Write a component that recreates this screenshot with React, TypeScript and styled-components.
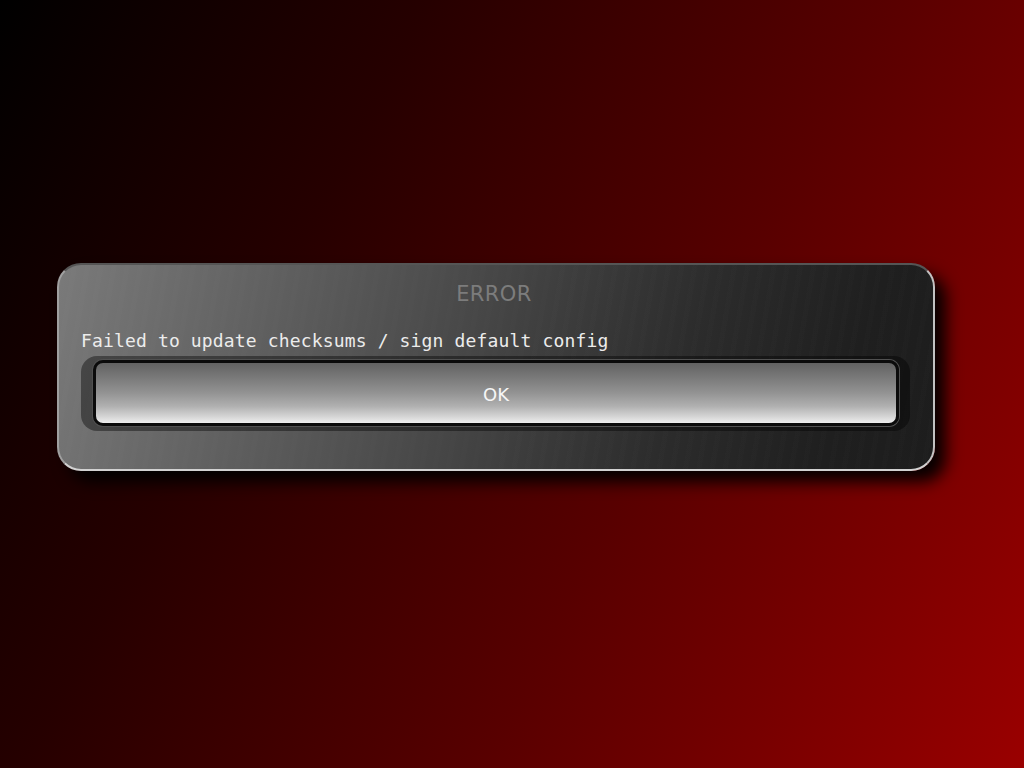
import React from "react";
import styled, { createGlobalStyle } from "styled-components";

const GlobalStyle = createGlobalStyle`
  html, body {
    margin: 0;
    padding: 0;
    width: 100%;
    height: 100%;
  }
  body {
    background: linear-gradient(118deg, #000000 0%, #260000 30%, #580000 62%, #9a0000 100%);
    overflow: hidden;
  }
  #root {
    width: 100%;
    height: 100%;
  }
`;

const Screen = styled.div`
  width: 1024px;
  height: 768px;
  box-sizing: border-box;
  padding: 263px 0 0 57px;
`;

const Dialog = styled.div`
  box-sizing: border-box;
  width: 878px;
  height: 208px;
  border-radius: 24px;
  border-style: solid;
  border-width: 2px;
  border-color: #555555 #c2c2c2 #d2d2d2 #a0a0a0;
  background:
    repeating-linear-gradient(100deg, rgba(255, 255, 255, 0.008) 0 5px, rgba(255, 255, 255, 0) 5px 13px),
    linear-gradient(108deg, #7a7a7a 0%, #5e5e5e 25%, #454545 48%, #2c2c2c 70%, #1f1f1f 88%, #1d1d1d 100%);
  box-shadow: 11px 11px 16px rgba(0, 0, 0, 0.95);
  padding: 17px 22px 0 22px;
  display: flex;
  flex-direction: column;
`;

const Title = styled.div`
  font-family: "DejaVu Sans", "Liberation Sans", sans-serif;
  font-size: 21px;
  line-height: 24px;
  letter-spacing: 0.4px;
  color: #7c7c7c;
  text-align: center;
  padding-right: 4px;
`;

const Message = styled.div`
  margin-top: 24px;
  font-family: "DejaVu Sans Mono", "Liberation Mono", monospace;
  font-size: 18px;
  line-height: 21px;
  letter-spacing: 0.15px;
  color: #ececec;
  white-space: pre;
  -webkit-font-smoothing: antialiased;
`;

const ButtonWell = styled.div`
  margin-top: 5px;
  box-sizing: border-box;
  width: 829px;
  border-radius: 16px;
  background: rgba(0, 0, 0, 0.4);
  padding: 4px 11px 5px 12px;
  display: flex;
`;

const FaceButton = styled.button`
  flex: 1;
  box-sizing: border-box;
  height: 66px;
  border: 3px solid #0b0b0b;
  border-radius: 10px;
  box-shadow: 0 0 0 1px #505050;
  background: linear-gradient(180deg, #626262 0%, #7a7a7a 25%, #939393 50%, #b0b0b0 72%, #d2d2d2 88%, #eeeeee 100%);
  font-family: "DejaVu Sans", "Liberation Sans", sans-serif;
  font-size: 18px;
  color: #f6f6f6;
  padding: 3px 0 0 0;
  cursor: pointer;
  display: flex;
  align-items: center;
  justify-content: center;
`;

export default function App() {
  return (
    <>
      <GlobalStyle />
      <Screen>
        <Dialog>
          <Title>ERROR</Title>
          <Message>Failed to update checksums / sign default config</Message>
          <ButtonWell>
            <FaceButton>OK</FaceButton>
          </ButtonWell>
        </Dialog>
      </Screen>
    </>
  );
}
